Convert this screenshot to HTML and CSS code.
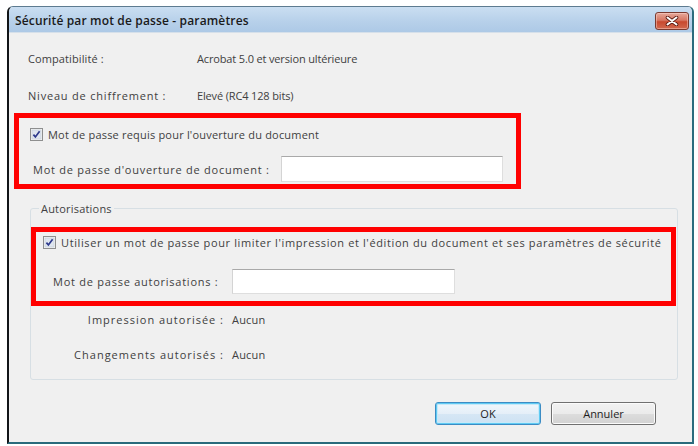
FILE: index.html
```html
<!DOCTYPE html>
<html lang="fr">
<head>
<meta charset="utf-8">
<title>Sécurité par mot de passe - paramètres</title>
<link rel="stylesheet" href="styles.css">
</head>
<body>
<div class="window">
  <div class="titlebar">
    <span class="title">Sécurité par mot de passe - paramètres</span>
    <span class="close">
      <svg width="14" height="10" viewBox="0 0 14 10"><path d="M2.5 1.5 L11.5 8.5 M11.5 1.5 L2.5 8.5" stroke="#5a1a12" stroke-width="3.6" stroke-linecap="round"/><path d="M2.5 1.5 L11.5 8.5 M11.5 1.5 L2.5 8.5" stroke="#ffffff" stroke-width="2" stroke-linecap="round"/></svg>
    </span>
  </div>
  <div class="content">
    <div class="info-row first">
      <span class="info-label">Compatibilité :</span>
      <span class="info-value">Acrobat 5.0 et version ultérieure</span>
    </div>
    <div class="info-row second">
      <span class="info-label wide">Niveau de chiffrement :</span>
      <span class="info-value">Elevé (RC4 128 bits)</span>
    </div>

    <div class="redbox box-open">
      <div class="check-row">
        <span class="checkbox"><svg width="13" height="13" viewBox="0 0 13 13"><rect x="0.5" y="0.5" width="12" height="12" fill="#f4f4f4" stroke="#8e8f8f"/><rect x="2" y="2" width="9" height="9" fill="#dfe6ef" stroke="#c4ccd6" stroke-width="0.6"/><path d="M3.4 6.6 L5.4 8.9 L9.6 3.3" fill="none" stroke="#2e3a8c" stroke-width="1.7"/></svg></span>
        <span class="check-label short">Mot de passe requis pour l'ouverture du document</span>
      </div>
      <div class="field-row field-open">
        <span class="field-label">Mot de passe d'ouverture de document :</span>
        <span class="input input-open"></span>
      </div>
    </div>

    <fieldset class="group">
      <legend class="group-title">Autorisations</legend>
      <div class="redbox box-perm">
        <div class="check-row">
          <span class="checkbox"><svg width="13" height="13" viewBox="0 0 13 13"><rect x="0.5" y="0.5" width="12" height="12" fill="#f4f4f4" stroke="#8e8f8f"/><rect x="2" y="2" width="9" height="9" fill="#dfe6ef" stroke="#c4ccd6" stroke-width="0.6"/><path d="M3.4 6.6 L5.4 8.9 L9.6 3.3" fill="none" stroke="#2e3a8c" stroke-width="1.7"/></svg></span>
          <span class="check-label long">Utiliser un mot de passe pour limiter l'impression et l'édition du document et ses paramètres de sécurité</span>
        </div>
        <div class="field-row field-perm">
          <span class="field-label">Mot de passe autorisations :</span>
          <span class="input input-perm"></span>
        </div>
      </div>
      <div class="perm-row perm-print">
        <span class="perm-label">Impression autorisée :</span>
        <span class="perm-value">Aucun</span>
      </div>
      <div class="perm-row perm-change">
        <span class="perm-label">Changements autorisés :</span>
        <span class="perm-value">Aucun</span>
      </div>
    </fieldset>

    <div class="buttons">
      <span class="btn btn-default">OK</span>
      <span class="btn">Annuler</span>
    </div>
  </div>
</div>
</body>
</html>
```

FILE: styles.css
```css
* { box-sizing: border-box; }
html, body {
  margin: 0;
  padding: 0;
  background: #ffffff;
}
body {
  font-family: "Open Sans", "Noto Sans", sans-serif;
  font-size: 11px;
  color: #404040;
}
.window {
  margin: 6px 0 0 7px;
  width: 687px;
  height: 438px;
  border-top: 1px solid #5d7b90;
  border-left: 2px solid #121518;
  border-right: 2px solid #2c6c7e;
  border-bottom: 2px solid #2a6b7c;
  border-radius: 6px 6px 0 0;
  background: #f0f0f0;
  display: flex;
  flex-direction: column;
  overflow: hidden;
}
.titlebar {
  height: 26px;
  flex: none;
  display: flex;
  justify-content: space-between;
  align-items: flex-start;
  padding: 0 3px 0 6px;
  background: linear-gradient(#cadef1, #b8d1ea 55%, #adc9e6);
  border-bottom: 1px solid #d6e0ea;
}
.title {
  font-weight: 600;
  font-size: 12px;
  color: #1a1a1a;
  line-height: 16px;
  margin-top: 6px;
  letter-spacing: 0.15px;
}
.close {
  margin-top: 5px;
  width: 34px;
  height: 18px;
  border: 1px solid #7a3a30;
  border-radius: 3px;
  background: linear-gradient(#e6a99b, #d77763 45%, #c8492f 55%, #d2694f);
  display: flex;
  align-items: center;
  justify-content: center;
  box-shadow: inset 0 0 0 1px rgba(255,220,210,0.45);
}
.close svg { display: block; }
.content {
  flex: 1;
  padding-top: 6px;
  display: flex;
  flex-direction: column;
}
.info-row {
  display: flex;
  align-items: center;
  padding-left: 19px;
}
.info-row.first { height: 38px; }
.info-row.second { height: 36px; }
.info-label { width: 169px; letter-spacing: 0.1px; }
.info-label.wide { letter-spacing: 0.8px; }
.info-value { letter-spacing: -0.15px; }
.redbox {
  border: 5px solid #ff0000;
  display: flex;
  flex-direction: column;
}
.box-open {
  margin-left: 5px;
  width: 507px;
  height: 76px;
  padding: 5px 0 0 11px;
}
.check-row {
  display: flex;
  align-items: center;
  height: 22px;
}
.checkbox { display: flex; width: 13px; height: 13px; }
.checkbox svg { display: block; }
.check-label { margin-left: 5px; white-space: nowrap; }
.check-label.short { letter-spacing: 0.2px; }
.check-label.long { letter-spacing: 0.62px; }
.field-row {
  display: flex;
  align-items: center;
}
.field-label { letter-spacing: 0.75px; white-space: nowrap; }
.field-open {
  margin-top: 11px;
  height: 26px;
  margin-left: 3px;
}
.field-open .field-label { width: 248px; }
.input {
  display: block;
  background: #ffffff;
  border: 1px solid #dedede;
  border-top-color: #a9a9a9;
  border-left-color: #d4d4d4;
}
.input-open { width: 222px; height: 26px; }
.group {
  margin: 12px 0 0 21px;
  width: 648px;
  height: 179px;
  padding: 0;
  border: 1px solid #d7dfe4;
  border-radius: 3px;
  display: flex;
  flex-direction: column;
}
.group-title {
  margin-left: 8px;
  padding: 0 2px;
  line-height: 15px;
  color: #404040;
  letter-spacing: 0.2px;
}
.box-perm {
  margin-top: 11px;
  width: 645px;
  height: 79px;
  padding: 0 0 0 7px;
}
.box-perm .check-row { height: 20px; }
.field-perm {
  margin-top: 17px;
  height: 25px;
  margin-left: 10px;
}
.field-perm .field-label { width: 179px; }
.input-perm { width: 223px; height: 25px; }
.perm-row {
  display: flex;
  align-items: center;
  height: 20px;
}
.perm-print { margin-top: 3px; }
.perm-change { margin-top: 15px; }
.perm-label {
  width: 193px;
  text-align: right;
  letter-spacing: 1px;
}
.perm-value { margin-left: 8px; letter-spacing: 0.2px; }
.buttons {
  margin-top: 22px;
  display: flex;
  gap: 10px;
  padding-left: 426px;
}
.btn {
  display: flex;
  align-items: center;
  justify-content: center;
  height: 23px;
  width: 105px;
  border: 1px solid #707070;
  border-radius: 3px;
  background: linear-gradient(#f2f2f2, #ebebeb 50%, #dddddd 51%, #d2d2d2);
  color: #1e1e1e;
  box-shadow: inset 0 0 0 1px #fbfbfb;
}
.btn-default {
  width: 106px;
  border-color: #3c8cc4;
  background: linear-gradient(#f1f7fc, #e5eff8 50%, #d6e7f5 51%, #cde2f3);
  box-shadow: inset 0 0 0 1px #5fcaf3, inset 0 0 0 2px #c8e9f8;
}
```
